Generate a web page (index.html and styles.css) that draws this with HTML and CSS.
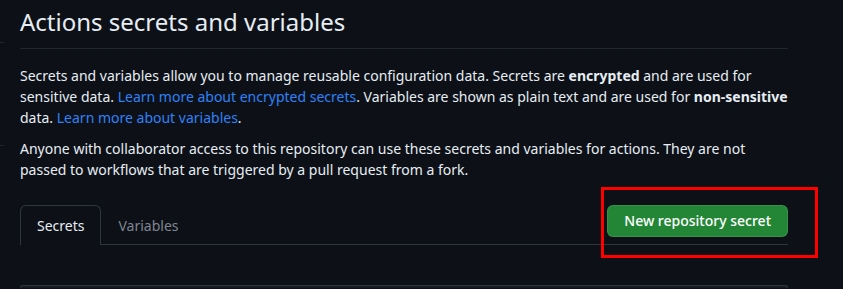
FILE: index.html
```html
<!DOCTYPE html>
<html>
<head>
<meta charset="utf-8">
<link rel="stylesheet" href="styles.css">
</head>
<body>
<div class="layout">
  <nav class="sidebar">
    <div class="side-item side-a"></div>
    <div class="side-item side-b"></div>
  </nav>
  <main class="main">
    <div class="subhead">
      <h2 class="subhead-heading">Actions secrets and variables</h2>
    </div>
    <p>Secrets and variables allow you to manage reusable configuration data. Secrets are <strong>encrypted</strong> and are used for sensitive data. <a href="#">Learn more about encrypted secrets</a>. Variables are shown as plain text and are used for <strong>non-sensitive</strong> data. <a href="#">Learn more about variables</a>.</p>
    <p>Anyone with collaborator access to this repository can use these secrets and variables for actions. They are not passed to workflows that are triggered by a pull request from a fork.</p>
    <div class="tabnav">
      <div class="tabs">
        <a class="tab selected" href="#">Secrets</a>
        <a class="tab" href="#">Variables</a>
      </div>
      <button class="btn-primary">New repository secret</button>
    </div>
    <div class="box"></div>
  </main>
</div>
<div class="highlight"></div>
</body>
</html>
```
FILE: styles.css
```css
html, body {
  margin: 0;
  padding: 0;
  background: #0d1117;
  color: #e6edf3;
  font-family: "Noto Sans", "Liberation Sans", sans-serif;
  font-size: 14px;
  line-height: 1.5;
  overflow: hidden;
}
.layout {
  display: flex;
  height: 289px;
}
.sidebar {
  width: 4px;
  flex-shrink: 0;
}
.side-item {
  border-bottom: 1px solid #21262d;
}
.side-a { height: 42px; }
.side-b { height: 102px; }
.main {
  margin-left: 16px;
  width: 768px;
  padding-top: 4px;
}
.subhead {
  padding-bottom: 8px;
  border-bottom: 1px solid #21262d;
  margin-bottom: 16px;
}
.subhead-heading {
  margin: 0;
  font-size: 24px;
  font-weight: 400;
  line-height: 36px;
}
p {
  margin: 0 0 10px;
}
strong { font-weight: 700; }
a {
  color: #2f81f7;
  text-decoration: none;
}
.tabnav {
  margin-top: 25px;
  display: flex;
  justify-content: space-between;
  align-items: flex-start;
  border-bottom: 1px solid #30363d;
  margin-bottom: 40px;
}
.tabs {
  display: flex;
  margin-bottom: -1px;
}
.tab {
  display: block;
  padding: 8px 16px;
  line-height: 23px;
  font-size: 14px;
  color: #7d8590;
  border: 1px solid transparent;
  border-bottom: 0;
  border-radius: 6px 6px 0 0;
}
.tab.selected {
  color: #e6edf3;
  background: #0d1117;
  border-color: #30363d;
}
.btn-primary {
  font-family: inherit;
  font-size: 14px;
  font-weight: 500;
  line-height: 20px;
  padding: 5px 16px;
  color: #ffffff;
  background: #238636;
  border: 1px solid rgba(240, 246, 252, 0.1);
  border-radius: 6px;
}
.box {
  height: 2px;
  border: 1px solid #30363d;
  border-bottom: 0;
  border-radius: 6px 6px 0 0;
  background: #161b22;
}
.highlight {
  position: absolute;
  left: 601px;
  top: 187px;
  width: 211px;
  height: 65px;
  border: 3px solid #ff0000;
}
```
